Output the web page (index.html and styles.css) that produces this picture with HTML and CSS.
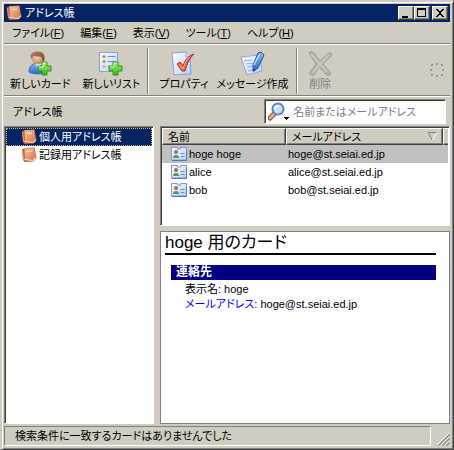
FILE: index.html
```html
<!DOCTYPE html>
<html lang="ja">
<head>
<meta charset="utf-8">
<meta name="viewport" content="width=device-width, initial-scale=1">
<title>アドレス帳</title>
<link rel="stylesheet" href="styles.css">
</head>
<body>
<svg class="defs" aria-hidden="true">
  <defs>
    <linearGradient id="leather" x1="0" y1="0" x2="1" y2="1"><stop offset="0" stop-color="#fcc49c"/><stop offset="1" stop-color="#d4784c"/></linearGradient>
    <linearGradient id="paper" x1="0" y1="0" x2="1" y2="1"><stop offset="0" stop-color="#ffffff"/><stop offset="1" stop-color="#b4d0f6"/></linearGradient>
    <linearGradient id="green" x1="0" y1="0" x2="0" y2="1"><stop offset="0" stop-color="#a2ec74"/><stop offset="1" stop-color="#3cb41e"/></linearGradient>
    <linearGradient id="blue" x1="0" y1="0" x2="0" y2="1"><stop offset="0" stop-color="#8cbcf4"/><stop offset="1" stop-color="#2c66cc"/></linearGradient>
    <linearGradient id="hair" x1="0" y1="0" x2="1" y2="1"><stop offset="0" stop-color="#b88468"/><stop offset="1" stop-color="#7c4228"/></linearGradient>
    <radialGradient id="face" cx=".4" cy=".4" r=".7"><stop offset="0" stop-color="#f4ceb0"/><stop offset="1" stop-color="#b87c58"/></radialGradient>
    <symbol id="book" viewBox="0 0 16 16">
      <path d="M1 2.500 4 1l9.500-.5 2 11-3 3-9 .5L2 13z" fill="#b86840"/>
      <path d="M3 13l9.500 1 2.500-2.500-.5-1.500L4 11.500z" fill="#f6e2d0"/>
      <path d="M3.500 1.500 13 1l1.500 9.500-2.500 2.500-8-1z" fill="url(#leather)"/>
      <path d="M1.500 3l1 9.500" stroke="#e4a078" fill="none"/>
      <path d="M6 4.500l5-.3" stroke="#fde4d0" fill="none"/>
    </symbol>
    <symbol id="plus" viewBox="0 0 15 15">
      <path d="M5 1h5v4h4v5h-4v4H5v-4H1V5h4z" fill="url(#green)" stroke="#2f9420"/>
      <path d="M6 2h3M2 6h4V2" stroke="#c8f6a8" fill="none"/>
    </symbol>
    <symbol id="card" viewBox="0 0 16 14">
      <path d="M.5 .5h6v1.500h3V.5h6v12.500H.5z" fill="url(#paper)" stroke="#7898d8"/>
      <path d="M1 13.500h14.500v-10" stroke="#5478c0" fill="none"/>
      <circle cx="5" cy="5" r="2" fill="#b06846"/>
      <path d="M2 11c0-4 6-4 6 0z" fill="#3c9c64"/>
      <path d="M9.500 6.500h4M9.500 9.500h4" stroke="#5c90e0" fill="none"/>
    </symbol>
  </defs>
</svg>
<div class="window">
  <header class="titlebar">
    <svg class="book"><use href="#book"/></svg>
    <h1 class="title">アドレス帳</h1>
    <div class="controls">
      <button class="control" aria-label="最小化"><svg viewBox="0 0 14 12"><path d="M3 9h6v2H3z"/></svg></button>
      <button class="control" aria-label="最大化"><svg viewBox="0 0 14 12"><path d="M2 1h9v9H2zM3 3v6h7V3z" fill-rule="evenodd"/></svg></button>
      <button class="control close" aria-label="閉じる"><svg viewBox="0 0 14 12"><path d="M3 2h2v1h1v1h2V3h1V2h2v1h-1v1H9v1H8v2h1v1h1v1h1v1H9V9H8V8H6v1H5v1H3V9h1V8h1V7h1V5H5V4H4V3H3z"/></svg></button>
    </div>
  </header>
  <nav class="menubar">
    <button>ファイル(<u>F</u>)</button>
    <button>編集(<u>E</u>)</button>
    <button>表示(<u>V</u>)</button>
    <button>ツール(<u>T</u>)</button>
    <button>ヘルプ(<u>H</u>)</button>
  </nav>
  <div class="toolbar">
    <div class="group">
      <button class="tool">
        <svg viewBox="0 0 25 25">
          <path d="M1 21c0-6 4-9 9-9s8 3 8 9c-4 2.500-13 2.500-17 0z" fill="url(#blue)" stroke="#3468c0"/>
          <path d="M7 12l3 5 4-5z" fill="#eef5ff"/>
          <circle cx="10" cy="7.500" r="6" fill="url(#face)"/>
          <path d="M3 8C1 2 6 0 10 .5c5-.5 8 4 6 10l-2-1c1-3-1-4-3-4-3 0-5-1-6 0z" fill="url(#hair)"/>
          <use href="#plus" x="9" y="10" width="15" height="15"/>
        </svg>
        <span>新しいカード</span>
      </button>
      <button class="tool">
        <svg viewBox="0 0 25 25">
          <path d="M.5 1.500h18v19H.5z" fill="url(#paper)" stroke="#7ca4e0"/>
          <circle cx="5" cy="5.500" r="1.600" fill="#e07058"/><circle cx="5" cy="10.500" r="1.600" fill="#78a878"/><circle cx="5" cy="15.500" r="1.600" fill="#f0a868"/>
          <path d="M8.500 5.500h8M8.500 10.500h8M8.500 15.500h5" stroke="#6c90d8" fill="none"/>
          <use href="#plus" x="9" y="10" width="15" height="15"/>
        </svg>
        <span>新しいリスト</span>
      </button>
    </div>
    <div class="group">
      <button class="tool">
        <svg viewBox="0 0 25 25">
          <path d="M1 2l14-1 4 4 1 18-17 1z" fill="url(#paper)" stroke="#78a0dc"/>
          <path d="M15 1v5l4-1" fill="#d8e8ff" stroke="#88ace0"/>
          <path d="M6 13l3-2 3 4c2-6 5-10 11-12-4 4-7 9-9 17h-3z" fill="#e8694c" stroke="#b02c20"/>
          <path d="M8 13l4 5c2-7 4-10 7-12" fill="none" stroke="#f8ac90"/>
        </svg>
        <span>プロパティ</span>
      </button>
      <button class="tool">
        <svg viewBox="0 0 25 25">
          <path d="M1 6l19-2 2 16-15 4z" fill="url(#paper)" stroke="#88ace0"/>
          <path d="M4 10l8-1M6 13l7-1M7 16l5-1M8 20l9-2" stroke="#98aed4" fill="none"/>
          <path d="M18 2l3-1 3 3-6 13-5 3 0-6z" fill="url(#blue)" stroke="#2450a8"/>
          <path d="M19 4l-5 10" stroke="#b8dcff" stroke-width="1.500"/>
          <path d="M13 18v3l3-2z" fill="#243c70"/>
        </svg>
        <span>メッセージ作成</span>
      </button>
    </div>
    <div class="group">
      <button class="tool" disabled>
        <svg viewBox="0 0 25 25">
          <path d="M1 2c1-2 4-2 5 0l6 8 9-8c2-1 4 1 2 3l-8 8 8 9c0 2-3 3-4 2l-8-8-5 8c-2 1-5 0-4-3l6-8z" fill="#b4b2a8" stroke="#a09e94"/>
          <path d="M3 3l16 18M21 4 4 22" stroke="#cac8be" stroke-width="2"/>
        </svg>
        <span>削除</span>
      </button>
    </div>
    <svg class="throbber" viewBox="0 0 15 15" aria-hidden="true"><path d="M6 0h2v2H6zM11 1h2v2h-2zM12 6h2v2h-2zM11 11h2v2h-2zM6 12h2v2H6zM1 11h2v2H1zM0 6h2v2H0zM1 1h2v2H1z"/></svg>
  </div>
  <div class="searchrow">
    <span>アドレス帳</span>
    <div class="search">
      <button class="scope" aria-label="検索対象">
        <svg viewBox="0 0 22 20">
          <path d="M8 10 2 16" stroke="#884c34" stroke-width="5" stroke-linecap="round"/>
          <path d="M7 11l-5 5" stroke="#e8a880" stroke-width="3" stroke-linecap="round"/>
          <circle cx="10" cy="7" r="5.500" fill="#c4e2fc" stroke="#5c84c8" stroke-width="2"/>
          <path d="M7 7c0-2 2-3 4-3" stroke="#fff" stroke-width="2" fill="none"/>
          <path d="M16 15h5v1h-1v1h-1v1h-1v-1h-1v-1h-1z" fill="#000"/>
        </svg>
      </button>
      <input type="text" aria-label="名前またはメールアドレス" placeholder="名前またはメールアドレス">
    </div>
  </div>
  <main class="content">
    <ul class="tree">
      <li><button class="selected"><svg class="book"><use href="#book"/></svg>個人用アドレス帳</button></li>
      <li><button><svg class="book"><use href="#book"/></svg>記録用アドレス帳</button></li>
    </ul>
    <div class="right">
      <div class="list">
        <table>
          <colgroup><col class="name"><col><col class="picker"></colgroup>
          <thead><tr><th>名前</th><th><span class="sort">メールアドレス<svg viewBox="0 0 9 9"><path d="M0 .5h8.500" stroke="#808080"/><path d="M.5 1l4 7.500" stroke="#808080"/><path d="M8.500 1l-4 7.500" stroke="#fff"/></svg></span></th><th></th></tr></thead>
          <tbody>
            <tr class="selected"><td><span class="person"><svg><use href="#card"/></svg>hoge hoge</span></td><td>hoge@st.seiai.ed.jp</td><td></td></tr>
            <tr><td><span class="person"><svg><use href="#card"/></svg>alice</span></td><td>alice@st.seiai.ed.jp</td><td></td></tr>
            <tr><td><span class="person"><svg><use href="#card"/></svg>bob</span></td><td>bob@st.seiai.ed.jp</td><td></td></tr>
          </tbody>
        </table>
      </div>
      <section class="details">
        <h2>hoge 用のカード</h2>
        <h3>連絡先</h3>
        <p>表示名: hoge</p>
        <p><span class="key">メールアドレス:</span> hoge@st.seiai.ed.jp</p>
      </section>
    </div>
  </main>
  <footer class="statusbar">
    <div class="status">検索条件に一致するカードはありませんでした</div>
    <svg class="grip" viewBox="0 0 13 13" aria-hidden="true"><path d="M0 12 12 0M4 12l8-8M8 12l4-4" stroke="#fff"/><path d="M1 12.500 12.500 1M2 12.500 12.500 2M5 12.500 12.500 5M6 12.500 12.500 6M9 12.500 12.500 9M10 12.500l2.500-2.500" stroke="#808080"/></svg>
  </footer>
</div>
</body>
</html>
```
FILE: styles.css
```css
* { box-sizing: border-box; }

body {
  margin: 0;
  font: 11px/18px "Liberation Sans", "Noto Sans CJK JP", sans-serif;
  font-feature-settings: "palt";
  color: #000;
}

button, input { font: inherit; font-feature-settings: inherit; color: inherit; }
button { margin: 0; padding: 0; border: 0; background: none; white-space: nowrap; }
svg { display: block; flex: none; }
.defs { position: absolute; width: 0; height: 0; }

.window {
  display: flex;
  flex-direction: column;
  min-height: 100vh;
  padding: 2px 3px 3px 2px;
  background: #d0cdc0;
  border: 2px solid;
  border-color: #d0cdc0 #404040 #404040 #d0cdc0;
  border-right-width: 1px;
  border-bottom-width: 1px;
  box-shadow: inset 1px 1px #fff, inset -1px -1px #808080;
}

.book { width: 16px; height: 16px; }

.titlebar {
  display: flex;
  align-items: center;
  gap: 3px;
  height: 18px;
  padding: 0 2px;
  background: #042463;
  color: #fff;
}
.title { flex: 1; margin: 0; font-size: 11px; font-weight: 400; line-height: 18px; }
.controls { display: flex; }
.control {
  width: 16px;
  height: 14px;
  background: #d0cdc0;
  border: 1px solid;
  border-color: #fff #404040 #404040 #fff;
  box-shadow: inset -1px -1px #808080;
}
.control svg { width: 14px; height: 12px; }
.close { margin-left: 2px; }

.menubar { display: flex; height: 23px; border-bottom: 1px solid #fff; box-shadow: inset 0 -1px #808080; }
.menubar button { padding: 0 8px; }

.toolbar {
  display: flex;
  align-items: center;
  height: 52px;
  border-bottom: 1px solid #fff;
  box-shadow: inset 0 -1px #808080;
}
.group { display: flex; gap: 8px; height: 46px; padding: 0 8px 0 10px; border-right: 1px solid #fff; box-shadow: inset -1px 0 #808080; }
.group:first-child { gap: 12px; padding-left: 6px; }
.group:nth-child(3) { border: 0; box-shadow: none; }
.tool { display: flex; flex-direction: column; align-items: center; line-height: 16px; padding-top: 3px; }
.tool svg { width: 25px; height: 25px; }
.tool:disabled { color: #808080; }
.throbber { width: 15px; height: 15px; margin: 0 5px 0 auto; fill: #9a9a8c; }

.searchrow { display: flex; align-items: center; justify-content: space-between; height: 29px; padding: 0 4px 0 9px; }
.search {
  display: flex;
  align-items: center;
  width: 42%;
  height: 25px;
  background: #fff;
  border: 1px solid;
  border-color: #808080 #fff #fff #808080;
  box-shadow: inset 1px 1px #404040;
}
.scope { width: 26px; padding-left: 3px; }
.scope svg { width: 22px; height: 20px; }
.search input { flex: 1; min-width: 0; padding: 0 2px; border: 0; outline: 0; background: none; }
.search input::placeholder { color: #808080; opacity: 1; }

.content { flex: 1; display: flex; gap: 6px; }
.tree, .list, .details {
  background: #fff;
  border: 1px solid;
  border-color: #808080 #fff #fff #808080;
}
.tree { width: 150px; margin: 0; padding: 1px; list-style: none; box-shadow: inset 1px 1px #404040; }
.tree button { display: flex; align-items: center; gap: 2px; width: 100%; height: 18px; padding-left: 15px; }
.tree .selected { background: #042463; color: #fff; outline: 1px dotted #c8b878; outline-offset: -1px; }

.right { flex: 1; display: flex; flex-direction: column; gap: 5px; min-width: 0; }
.list { height: 100px; padding: 1px; box-shadow: inset 1px 1px #404040; }
table { width: 100%; border-collapse: separate; border-spacing: 0; table-layout: fixed; }
.name { width: 124px; }
.picker { width: 5px; }
th {
  height: 17px;
  padding: 0 5px;
  font-weight: 400;
  line-height: 14px;
  text-align: left;
  background: #d0cdc0;
  border: 1px solid;
  border-color: #fff #404040 #404040 #fff;
  box-shadow: inset -1px -1px #808080;
}
th:last-child { padding: 0; border-right: 0; box-shadow: inset 0 -1px #808080; }
td { height: 18px; padding: 0 2px; line-height: 18px; white-space: nowrap; }
td:first-child { padding-left: 9px; }
tbody .selected { background: #c0c0c0; }
.sort { display: flex; align-items: center; justify-content: space-between; }
.sort svg { width: 9px; height: 9px; }
.person { display: flex; align-items: center; gap: 2px; }
.person svg { width: 16px; height: 14px; }

.details { flex: 1; padding: 1px 13px 0 4px; border-color: #808080; }
.details h2 { margin: 0 0 10px; font-size: 17px; font-weight: 400; line-height: 20px; border-bottom: 2px solid #000; }
.details h3 { margin: 0 0 2px 6px; padding-left: 5px; font-size: 12px; line-height: 15px; background: #000080; color: #fff; }
.details p { margin: 0 0 0 20px; line-height: 15px; }
.key { color: #00f; }

.statusbar { display: flex; align-items: flex-end; justify-content: space-between; gap: 6px; padding-top: 2px; }
.status { flex: 1; height: 20px; padding-left: 10px; border: 1px solid; border-color: #808080 #fff #fff #808080; }
.grip { width: 13px; height: 13px; }
```
